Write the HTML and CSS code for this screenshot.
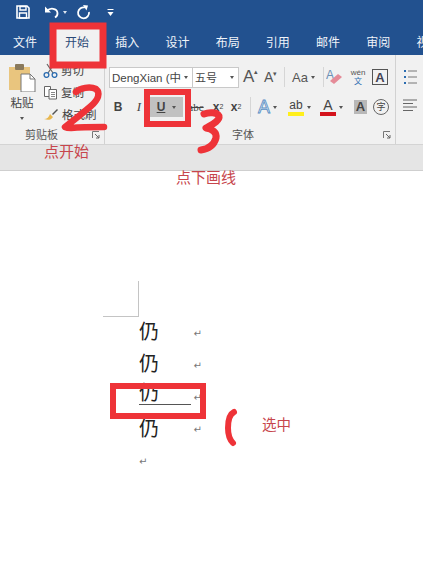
FILE: index.html
```html
<!DOCTYPE html>
<html lang="zh">
<head>
<meta charset="utf-8">
<title>Word</title>
<link rel="stylesheet" href="styles.css">
</head>
<body>
<div class="app">
  <header class="chrome">
    <div class="qat">
      <svg class="q-save" width="16" height="16" viewBox="0 0 16 16"><path d="M2 2h10l2 2v10H2z" fill="none" stroke="#fff" stroke-width="1.6"/><path d="M5 2.500h6v3.500H5zM4.500 9h7v5h-7z" fill="none" stroke="#fff" stroke-width="1.400"/></svg>
      <svg class="q-undo" width="16" height="14" viewBox="0 0 16 14"><path d="M3 6c3-3.500 10-3 10.500 2 .2 2-1 3.500-2.500 4.500" fill="none" stroke="#fff" stroke-width="1.800"/><path d="M1 1.500v6h6z" fill="#fff"/></svg>
      <span class="q-drop"></span>
      <svg class="q-redo" width="15" height="15" viewBox="0 0 15 15"><path d="M9 2.500A5.500 5.500 0 1 0 13 7" fill="none" stroke="#fff" stroke-width="1.800"/><path d="M7 0l5 .5-1.500 5z" fill="#fff"/></svg>
      <svg class="q-more" width="7" height="9" viewBox="0 0 7 9"><path d="M.5 1h6v1h-6zM.5 4h6L3.500 8z" fill="#fff"/></svg>
    </div>
    <nav class="tabs">
      <span class="tab">文件</span>
      <span class="tab active">开始</span>
      <span class="tab">插入</span>
      <span class="tab">设计</span>
      <span class="tab">布局</span>
      <span class="tab">引用</span>
      <span class="tab">邮件</span>
      <span class="tab">审阅</span>
      <span class="tab">视图</span>
    </nav>
  </header>

  <section class="ribbon">
    <div class="group clipboard">
      <div class="group-body clip-body">
        <div class="paste">
          <svg width="28" height="29" viewBox="0 0 28 29"><rect x="1" y="4" width="21" height="23" fill="#e9c57e"/><rect x="7" y="1" width="9" height="6" rx="1" fill="#8a7a5c"/><path d="M13 11h9l5 5v13H13z" fill="#fff" stroke="#777"/><path d="M22 11v5h5" fill="none" stroke="#777"/></svg>
          <span class="paste-label">粘贴</span>
          <span class="caret"></span>
        </div>
        <ul class="clip-list">
          <li><svg width="15" height="15" viewBox="0 0 15 15"><path d="M4 1l6 9M11 1L5 10" stroke="#666" stroke-width="1.200"/><circle cx="3.500" cy="12" r="2.400" fill="none" stroke="#2b6cb0" stroke-width="1.300"/><circle cx="11.500" cy="12" r="2.400" fill="none" stroke="#2b6cb0" stroke-width="1.300"/></svg><span>剪切</span></li>
          <li><svg width="15" height="15" viewBox="0 0 15 15"><path d="M1.500 1.500h6v10h-6z" fill="#fff" stroke="#666"/><path d="M6 4.500h7.500v9.500H6z" fill="#fff" stroke="#666"/><path d="M8 7.500h4M8 9.500h4M8 11.500h4" stroke="#888"/></svg><span>复制</span></li>
          <li><svg width="16" height="15" viewBox="0 0 16 15"><path d="M1 12c3 0 5-2 6-5l3 3c-2 3-5 3.500-9 2z" fill="#e8b74f"/><path d="M9 7l5-5 1 1-5 5z" fill="#555"/></svg><span>格式刷</span></li>
        </ul>
      </div>
      <footer class="group-foot clip-foot"><span class="group-name">剪贴板</span><svg class="launcher" width="8" height="8" viewBox="0 0 8 8"><path d="M.5 7V.5H7" fill="none" stroke="#777"/><path d="M3 3l4 4M7 4v3H4" fill="none" stroke="#666"/></svg></footer>
    </div>

    <div class="group font">
      <div class="group-body font-body">
        <div class="font-row top">
          <div class="combos">
            <span class="combo family">DengXian (中<i class="caret"></i></span>
            <span class="combo size">五号<i class="caret"></i></span>
          </div>
          <span class="cmd glyph-a big">A<sup>▴</sup></span>
          <span class="cmd glyph-a small">A<sup>▾</sup></span>
          <i class="sep"></i>
          <span class="cmd case">Aa<i class="caret"></i></span>
          <i class="sep"></i>
          <svg class="cmd-svg" width="16" height="18" viewBox="0 0 16 18"><text x="0" y="11" font-family="Liberation Sans" font-size="12" fill="#6a8fb5">A</text><path d="M4 13l8-7 4 3-8 7z" fill="#e58b98"/></svg>
          <span class="wen"><b>wén</b><b class="wen-char">文</b></span>
          <span class="boxed-a">A</span>
        </div>
        <div class="font-row bottom">
          <span class="fmt bold">B</span>
          <span class="fmt italic">I</span>
          <span class="fmt underline"><u>U</u><i class="caret"></i></span>
          <span class="fmt strike">abc</span>
          <span class="fmt script">x<sub>2</sub></span>
          <span class="fmt script">x<sup>2</sup></span>
          <i class="sep"></i>
          <span class="color effect">A<i class="caret"></i></span>
          <span class="color hilite"><span class="swatch yellow">ab</span><i class="caret"></i></span>
          <span class="color fontcolor"><span class="swatch red">A</span><i class="caret"></i></span>
          <span class="shade">A</span>
          <span class="circled">字</span>
        </div>
      </div>
      <footer class="group-foot font-foot"><span class="group-name">字体</span><svg class="launcher" width="8" height="8" viewBox="0 0 8 8"><path d="M.5 7V.5H7" fill="none" stroke="#777"/><path d="M3 3l4 4M7 4v3H4" fill="none" stroke="#666"/></svg></footer>
    </div>

    <div class="group para">
      <svg width="14" height="16" viewBox="0 0 14 16"><path d="M5 2h9M5 8h9M5 14h9" stroke="#777"/><path d="M1 1h2v2H1zM1 7h2v2H1zM1 13h2v2H1z" fill="#2b6cb0"/></svg>
      <svg width="14" height="12" viewBox="0 0 14 12"><path d="M0 1h14M0 4.500h10M0 8h14M0 11.500h10" stroke="#666"/></svg>
    </div>
  </section>
  <div class="band"></div>

  <main class="doc">
    <i class="crop"></i>
    <p class="line">仍<i class="ret">↵</i></p>
    <p class="line">仍<i class="ret">↵</i></p>
    <p class="line picked"><u>仍</u><i class="ret">↵</i></p>
    <p class="line">仍<i class="ret">↵</i></p>
    <p class="line last"><i class="ret">↵</i></p>
  </main>

  <svg class="marks" width="423" height="561" viewBox="0 0 423 561">
    <g fill="none" stroke="#ee3338" stroke-linecap="round" stroke-linejoin="round">
      <rect x="53" y="26" width="50" height="39" stroke-width="7" stroke-linejoin="miter"/>
      <rect x="147" y="92" width="41" height="32" stroke-width="6" stroke-linejoin="miter"/>
      <rect x="113" y="386" width="90" height="30" stroke-width="6" stroke-linejoin="miter"/>
      <path d="M76 92c4-4 14-6 20-3 5 4 2 11-5 17-8 7-17 14-26 21 2 1 4 1 6 1 11-1 23-1 33-1" stroke-width="6.500"/>
      <path d="M204 114c5-2 13-2 15 2 1 5-8 9-13 12 6 1 11 4 10 10-2 7-8 11-15 12" stroke-width="7"/>
      <path d="M234 412c-4 2-6 9-6 16 0 7 2 12 5 15" stroke-width="6"/>
    </g>
  </svg>
  <span class="note n1">点开始</span>
  <span class="note n2">点下画线</span>
  <span class="note n3">选中</span>
</div>
</body>
</html>
```
FILE: styles.css
```css
* { box-sizing: border-box; }
html, body { margin: 0; padding: 0; }
body { background: #fff; font-family: "Noto Sans CJK SC", "Liberation Sans", sans-serif; }
.app { position: relative; width: 423px; height: 561px; overflow: hidden; }
i { font-style: normal; }

.chrome { height: 55px; background: #22518f; color: #fff; overflow: hidden; }
.qat { height: 28px; display: flex; align-items: center; padding: 0 0 4px 15px; }
.q-undo { margin-left: 13px; }
.q-drop { width: 0; height: 0; margin: 0 0 0 3px; border: 2.500px solid transparent; border-top: 3px solid #dfe6f0; border-bottom: 0; }
.q-redo { margin-left: 9px; }
.q-more { margin-left: 16px; }
.tabs { display: flex; height: 27px; margin-left: -2px; width: 480px; }
.tab { width: 50.200px; flex: none; text-align: center; font-size: 12px; line-height: 27px; color: #f0f4f9; }
.tab:first-child { width: 54px; }
.tab.active { background: #f1f1f1; color: #2b4a78; }

.ribbon { height: 90px; background: #f1f1f1; border-bottom: 1px solid #d4d4d4; display: flex; }
.band { height: 26px; background: #e5e5e5; border-bottom: 1px solid #cfcfcf; }
.group { position: relative; display: flex; flex-direction: column; flex: none; }
.group-body { flex: 1; min-height: 0; }
.group-foot { height: 18px; position: relative; font-size: 11px; line-height: 17px; color: #555; }
.launcher { position: absolute; right: 4px; top: 5px; }

.clipboard { width: 105px; border-right: 1px solid #d2d2d2; }
.clip-body { display: flex; padding: 8px 0 0 7px; }
.clip-foot { padding-left: 25px; }
.paste { width: 30px; display: flex; flex-direction: column; align-items: center; font-size: 11.500px; color: #444; }
.paste-label { line-height: 16px; margin-top: 2px; }
.paste .caret { margin-top: 7px; }
.caret { display: inline-block; width: 0; height: 0; border: 2.500px solid transparent; border-top: 3px solid #555; border-bottom: 0; }
.clip-list { list-style: none; margin: -4px 0 0; padding: 0 0 0 6px; font-size: 11.500px; color: #444; }
.clip-list li { display: flex; align-items: center; gap: 3px; height: 22px; white-space: nowrap; }
.clip-list svg { flex: none; }

.font { width: 291px; border-right: 1px solid #d2d2d2; }
.font-body { padding: 11px 0 0 4px; }
.font-foot { padding-left: 127px; }
.font-row { display: flex; align-items: center; }
.font-row.top { height: 22px; }
.font-row.bottom { height: 22px; margin-top: 8px; }
.combos { display: flex; width: 130px; flex: none; }
.combo { display: flex; justify-content: space-between; align-items: center; height: 21px; background: #fff; border: 1px solid #c9c9c9; font-size: 11px; color: #444; padding: 0 4px 0 2px; white-space: nowrap; }
.family { width: 84px; font-family: "Liberation Sans", "Noto Sans CJK SC", sans-serif; font-size: 11.500px; }
.size { width: 46px; border-left: 0; }
.sep { display: block; flex: none; width: 1px; height: 20px; background: #d6d6d6; }
.cmd { display: flex; align-items: center; font-family: "Liberation Sans", sans-serif; color: #555; }
.glyph-a { width: 20px; }
.glyph-a sup { font-size: 7px; align-self: flex-start; line-height: 10px; }
.big { font-size: 17px; margin-left: 4px; width: 21px; }
.small { font-size: 14px; margin-right: 0; }
.case { font-size: 13px; gap: 3px; width: 38px; padding-left: 7px; }
.cmd-svg { flex: none; margin: 0 6px 0 2px; }
.wen { display: flex; flex-direction: column; align-items: center; width: 20px; font-family: "Liberation Sans", "Noto Sans CJK SC", sans-serif; font-size: 8px; line-height: 9px; color: #555; }
.wen b { font-weight: 400; }
.wen-char { color: #2b6cb0; }
.boxed-a { width: 16px; height: 16px; margin-left: 4px; border: 1px solid #555; text-align: center; font: 700 13px/15px "Liberation Sans", sans-serif; color: #445; }

.fmt { display: flex; align-items: center; justify-content: center; flex: none; height: 20px; font-family: "Liberation Serif", serif; font-size: 12px; color: #444; }
.bold { width: 18px; font: 700 12px "Liberation Sans", sans-serif; }
.italic { width: 16px; font-style: italic; font-size: 13px; margin: 0 3px 0 4px; }
.underline { width: 33px; gap: 7px; background: #c1c1c1; font: 700 12px "Liberation Sans", sans-serif; }
.strike { width: 26px; text-decoration: line-through; font-size: 11px; }
.script { width: 18px; font: 700 12px "Liberation Sans", sans-serif; }
.script sub, .script sup { font-size: 7px; font-weight: 400; line-height: 0; }
.bottom .sep { margin: 0 7px 0 5px; }
.color { display: flex; align-items: center; flex: none; width: 32px; gap: 3px; font-family: "Liberation Sans", sans-serif; color: #444; }
.effect { font-size: 18px; color: #dfeaf5; -webkit-text-stroke: .8px #5a8fc4; font-weight: 400; width: 30px; }
.swatch { display: block; width: 16px; text-align: center; font-size: 12px; line-height: 14px; }
.yellow { border-bottom: 4px solid #ffef1c; }
.red { border-bottom: 4px solid #d4131c; font-size: 14px; }
.shade { width: 13px; height: 14px; margin-left: 2px; background: #b8b8b8; text-align: center; font: 700 13px/14px "Liberation Sans", sans-serif; color: #444; }
.circled { width: 16px; height: 16px; margin-left: 6px; border: 1px solid #666; border-radius: 50%; text-align: center; font-size: 9px; line-height: 14px; color: #444; }

.para { flex: 1; padding: 14px 0 0 7px; gap: 14px; }

.doc { position: relative; height: 390px; padding: 144px 0 0 139px; color: #222; }
.crop { position: absolute; left: 103px; top: 110px; width: 36px; height: 36px; border-right: 1px solid #c4c4c4; border-bottom: 1px solid #c4c4c4; }
.line { display: flex; align-items: center; width: 63px; height: 32.200px; margin: 0; font-size: 20px; line-height: 32px; }
.line u { width: 52px; text-decoration: none; border-bottom: 1px solid #555; line-height: 22px; height: 24px; margin-top: -4px; }
.ret { margin-left: auto; margin-top: 5px; font-size: 10px; color: #777; font-family: "DejaVu Sans", sans-serif; }
.last .ret { margin-left: 0; }

.marks { position: absolute; left: 0; top: 0; pointer-events: none; }
.note { position: absolute; color: #c7464c; white-space: nowrap; }
.n1 { left: 44px; top: 143px; font-size: 15px; line-height: 15px; }
.n2 { left: 176px; top: 169px; font-size: 15px; line-height: 15px; }
.n3 { left: 262px; top: 416px; font-size: 14.500px; line-height: 15px; }
```
